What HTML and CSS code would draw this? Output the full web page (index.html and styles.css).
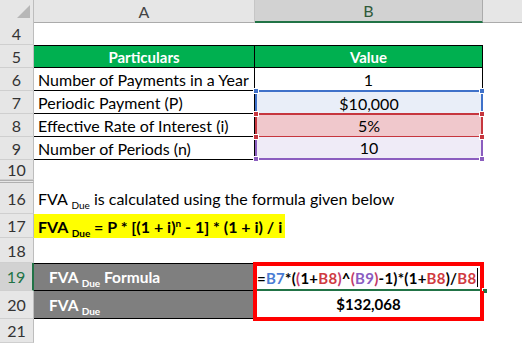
FILE: index.html
```html
<!DOCTYPE html>
<html>
<head>
<meta charset="utf-8">
<link rel="stylesheet" href="styles.css">
</head>
<body>
<div class="sheet">
  <div class="row hdr">
    <div class="corner"><svg width="33" height="22" viewBox="0 0 33 22"><polygon points="30,5 30,18 17,18" fill="#b7b7b7"/></svg></div>
    <div class="ch">A</div>
    <div class="ch sel">B</div>
    <div class="ch rest"></div>
  </div>

  <div class="row r23"><div class="rh">4</div><div class="c"></div><div class="c"></div><div class="c"></div></div>

  <div class="row r23">
    <div class="rh">5</div>
    <div class="c th thA">Particulars</div>
    <div class="c th thB">Value</div>
    <div class="c"></div>
  </div>

  <div class="row r23">
    <div class="rh">6</div>
    <div class="c la">Number of Payments in a Year</div>
    <div class="c vb plain">1</div>
    <div class="c"></div>
  </div>

  <div class="row r23">
    <div class="rh">7</div>
    <div class="c la">Periodic Payment (P)</div>
    <div class="c vb ref blue">$10,000<i class="sq tl"></i><i class="sq tr"></i></div>
    <div class="c"></div>
  </div>

  <div class="row r23">
    <div class="rh">8</div>
    <div class="c la">Effective Rate of Interest (i)</div>
    <div class="c vb ref red">5%<i class="sq tl"></i><i class="sq tr"></i><i class="sq bl"></i><i class="sq br"></i></div>
    <div class="c"></div>
  </div>

  <div class="row r23">
    <div class="rh">9</div>
    <div class="c la">Number of Periods (n)</div>
    <div class="c vb ref purple">10<i class="sq bl"></i><i class="sq br"></i></div>
    <div class="c"></div>
  </div>

  <div class="row r20"><div class="rh">10</div><div class="c"></div><div class="c"></div><div class="c"></div></div>
  <div class="row rhid"><div class="rh hid"></div><div class="c"></div><div class="c"></div><div class="c"></div></div>

  <div class="row r31">
    <div class="rh">16</div>
    <div class="c txt span3"><span>FVA <sub>Due</sub> is calculated using the formula given below</span></div>
  </div>

  <div class="row r24">
    <div class="rh">17</div>
    <div class="c span3"><span class="hl"><span>FVA <sub>Due</sub> = P * [(1 + i)<sup>n</sup> - 1] * (1 + i) / i</span></span></div>
  </div>

  <div class="row r25"><div class="rh">18</div><div class="c"></div><div class="c"></div><div class="c"></div></div>

  <div class="row r28">
    <div class="rh rsel">19</div>
    <div class="c gray gtop"><span>FVA <sub>Due</sub> Formula</span></div>
    <div class="c box btop"><div class="fx"><span>=<b class="cb">B7</b>*(<b class="cp">(</b>1+<b class="cr">B8</b><b class="cp">)</b>^<b class="cp">(</b><b class="cv">B9</b><b class="cp">)</b>-1)*(1+<b class="cr">B8</b>)/<b class="cr">B8</b></span><span class="caret"></span></div><i class="handle"></i></div>
    <div class="c"></div>
  </div>

  <div class="row r28">
    <div class="rh">20</div>
    <div class="c gray"><span>FVA <sub>Due</sub></span></div>
    <div class="c box bbot">$132,068</div>
    <div class="c"></div>
  </div>

  <div class="row r24"><div class="rh">21</div><div class="c"></div><div class="c"></div><div class="c"></div></div>
</div>
</body>
</html>
```

FILE: styles.css
```css
* { box-sizing: border-box; }
body {
  margin: 0;
  background: #fff;
  font-family: Lato, "Liberation Sans", sans-serif;
  font-size: 16px;
  color: #000;
}
.sheet {
  width: 522px;
  height: 343px;
  overflow: hidden;
}
.row {
  display: grid;
  grid-template-columns: 34px 221px 228px 1fr;
}
.hdr { height: 22px; }
.r23 { height: 23px; }
.r20 { height: 20px; }
.rhid { height: 3px; }
.r31 { height: 31px; }
.r24 { height: 24px; }
.r25 { height: 25px; }
.r28 { height: 28px; }

.corner {
  background: #e6e6e6;
  border-right: 1px solid #bdbdbd;
  border-bottom: 1px solid #ababab;
}
.corner svg { display: block; }
.ch {
  background: #e6e6e6;
  border-right: 1px solid #c6c6c6;
  border-bottom: 1px solid #ababab;
  display: flex;
  align-items: center;
  justify-content: center;
  color: #444;
  font-size: 16px;
}
.ch.sel {
  background: #d2d2d2;
  color: #2f5a3a;
  border-bottom: 2px solid #217346;
  border-right: 1px solid #ababab;
}
.ch.rest { border-right: none; }

.rh {
  background: #e6e6e6;
  border-right: 1px solid #bdbdbd;
  border-bottom: 1px solid #cfcfcf;
  display: flex;
  align-items: center;
  justify-content: center;
  color: #333;
  font-size: 16px;
}
.rh.hid {
  border-top: 1px solid #b0b0b0;
  border-bottom: 1px solid #b0b0b0;
}
.rh.rsel {
  background: #d2d2d2;
  color: #217346;
  border-right: 2px solid #217346;
}

.c {
  position: relative;
  display: flex;
  align-items: center;
  white-space: nowrap;
}
.span3 { grid-column: 2 / 5; }

.th {
  background: #00b050;
  color: #fff;
  font-weight: bold;
  font-size: 15px;
  justify-content: center;
  border-top: 1px solid #000;
  border-bottom: 1px solid #000;
}
.thA { border-right: 1px solid #000; }
.thB { border-right: 1px solid #000; }

.la {
  padding-left: 4px;
  border-bottom: 1px solid #000;
  border-right: 1px solid #000;
}
.vb { justify-content: center; }
.plain { border-right: 1px solid #000; }

.ref { border-left: 2px solid; border-right: 2px solid; }
.ref.blue { background: #e9eef8; border-color: #3f71c9; border-top: 2px solid #3f71c9; margin-top: -1px; }
.ref.red { background: #f0c8cc; border-color: #c6363e; border-top: 2px solid #c6363e; border-bottom: 2px solid #c6363e; margin-top: -1px; margin-bottom: -1px; }
.ref.purple { background: #efebf7; border-color: #8b5dbf; border-bottom: 2px solid #8b5dbf; }

.sq {
  position: absolute;
  width: 6px;
  height: 6px;
  border: 1px solid #fff;
  z-index: 2;
}
.blue .sq { background: #3f71c9; }
.red .sq { background: #c6363e; }
.purple .sq { background: #8b5dbf; }
.sq.tl { left: -4px; top: -4px; }
.sq.tr { right: -4px; top: -4px; }
.sq.bl { left: -4px; bottom: -4px; }
.sq.br { right: -4px; bottom: -4px; }

.txt { padding-left: 4px; }
sub { font-size: 10px; vertical-align: -4px; line-height: 0; }
sup { font-size: 10px; vertical-align: 6px; line-height: 0; }

.hl {
  background: #ffff00;
  font-weight: bold;
  font-size: 16px;
  height: 100%;
  display: flex;
  align-items: center;
  padding: 0 3px 0 4px;
}

.gray {
  background: #7f7f7f;
  color: #fff;
  font-weight: bold;
  font-size: 15.5px;
  padding-left: 15px;
  border-bottom: 1px solid #000;
  margin-right: -1px;
}
.gtop { border-top: 1px solid #000; }

.box {
  margin-left: -2px;
  margin-right: -1px;
  border-left: 4px solid #ff0000;
  border-right: 4px solid #ff0000;
  font-weight: bold;
  font-size: 15px;
}
.btop { border-top: 4px solid #ff0000; margin-top: -1px; align-items: stretch; }
.bbot { border-bottom: 4px solid #ff0000; margin-bottom: -2px; justify-content: center; }
.fx {
  flex: 1;
  display: flex;
  align-items: center;
  border-bottom: 2px solid #217346;
  letter-spacing: 0.25px;
}
.fx b { font-weight: bold; }
.cb { color: #4a7cd4; }
.cr { color: #d03a40; }
.cv { color: #8a5cc2; }
.cp { color: #c23a6a; }
.caret {
  display: inline-block;
  width: 1px;
  height: 19px;
  background: #000;
  margin-left: 1px;
}
.handle {
  position: absolute;
  right: -8px;
  bottom: -3px;
  width: 6px;
  height: 6px;
  background: #217346;
  border: 1px solid #fff;
}
```
